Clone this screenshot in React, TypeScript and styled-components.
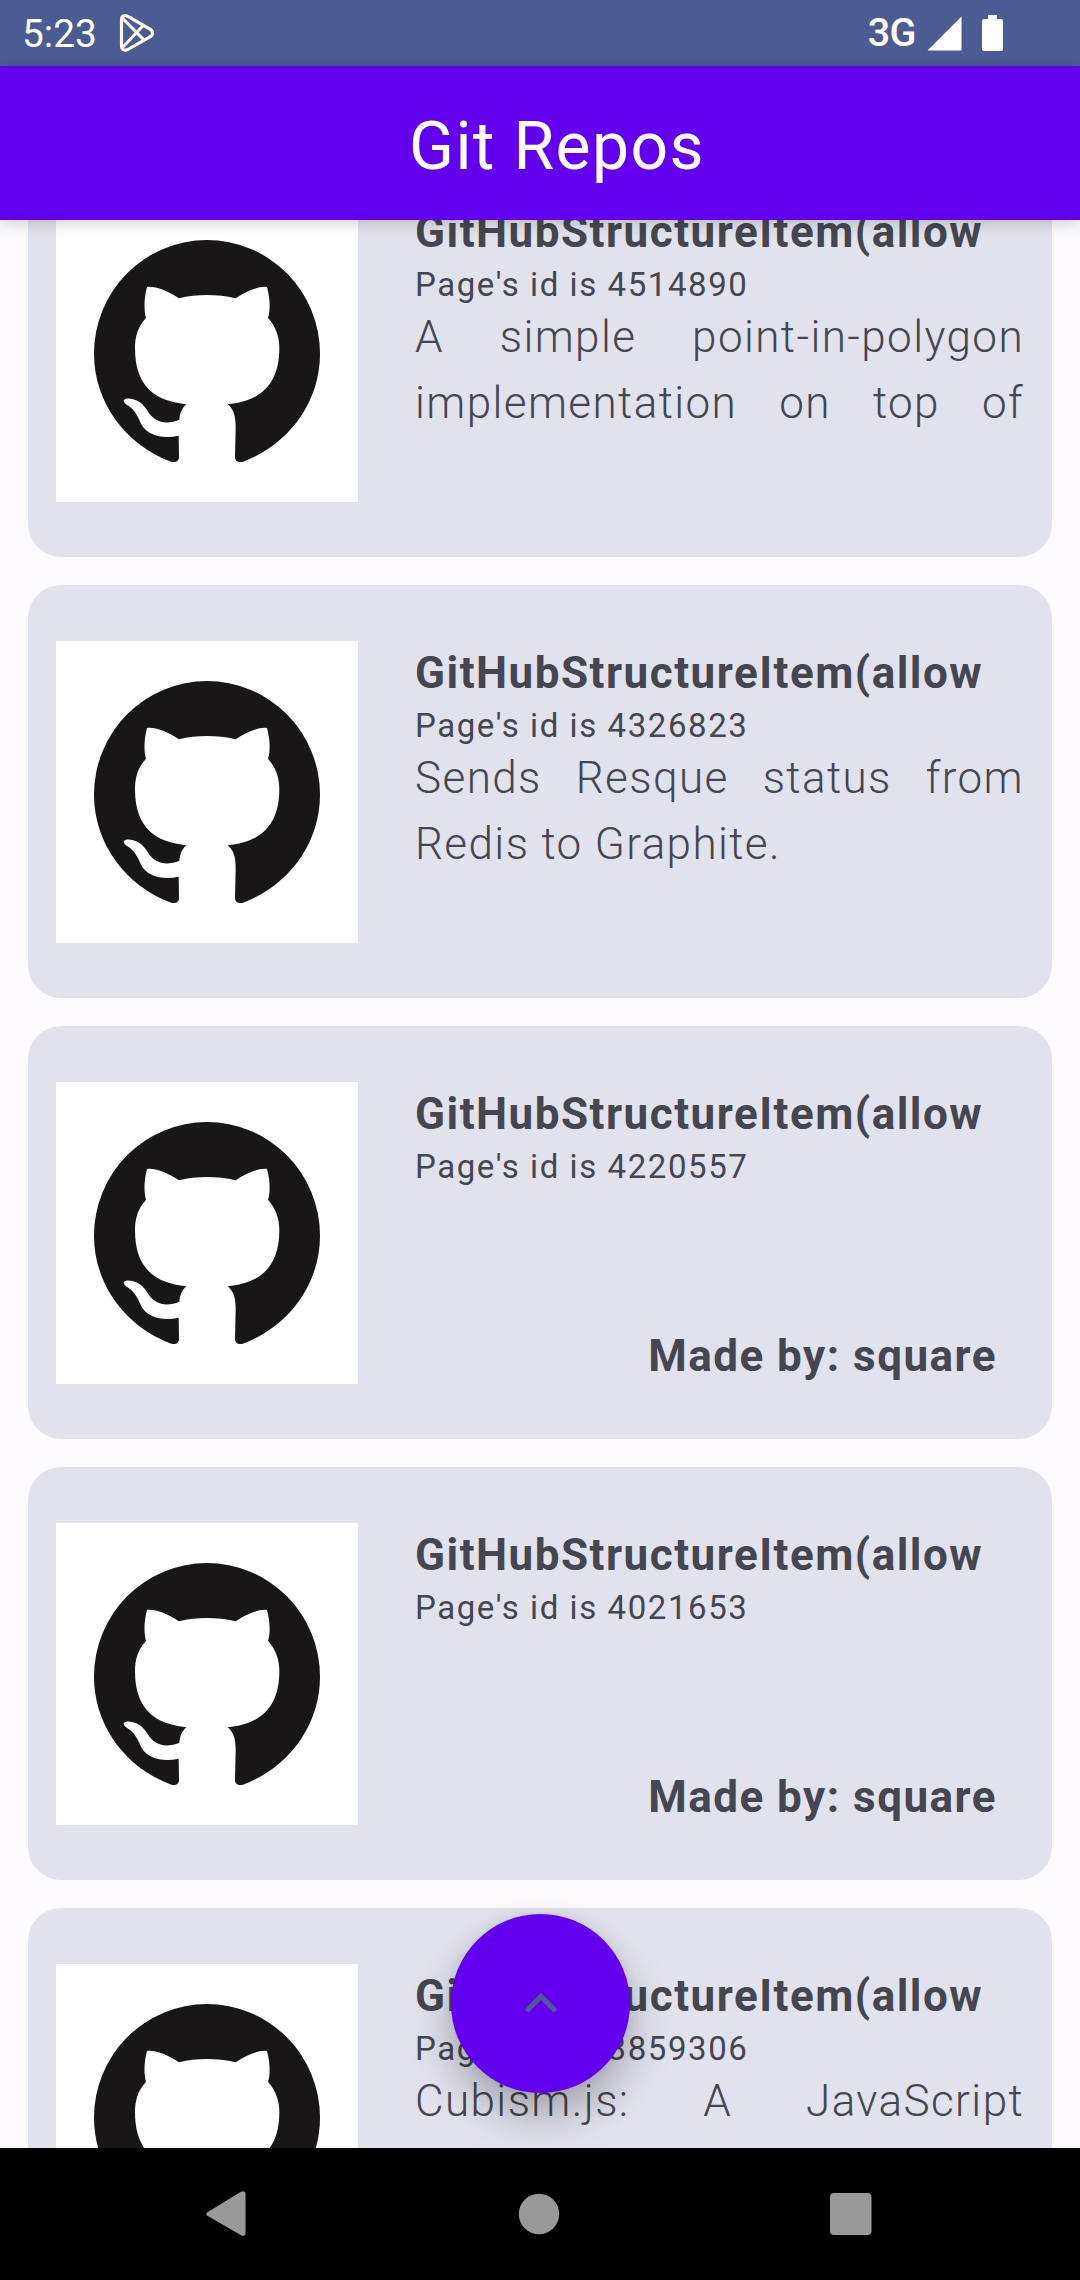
import React from 'react';
import styled, { createGlobalStyle } from 'styled-components';

const GlobalStyle = createGlobalStyle`
  * { box-sizing: border-box; }
  body { margin: 0; background: #fefbff; font-family: Roboto, "Liberation Sans", sans-serif; }
`;

const Screen = styled.div`
  width: 1080px;
  height: 2280px;
  display: flex;
  flex-direction: column;
  overflow: hidden;
  background: #fefbff;
  color: #45464f;
`;

const StatusBar = styled.header`
  flex: none;
  height: 66px;
  padding: 0 67px 0 22px;
  display: flex;
  align-items: center;
  justify-content: space-between;
  background: #4a5c92;
  color: #fff;
`;

const StatusGroup = styled.div<{ $gap: number }>`
  display: flex;
  align-items: center;
  gap: ${(p) => p.$gap}px;
`;

const Clock = styled.span`
  font-size: 38.8px;
  line-height: 46px;
  padding-top: 2px;
`;

const Network = styled.span`
  font-size: 39.5px;
  font-weight: 500;
  line-height: 46px;
  letter-spacing: -0.5px;
  padding-bottom: 1px;
`;

const AppBar = styled.div`
  flex: none;
  position: relative;
  z-index: 1;
  height: 154px;
  padding: 7px 0 0 34px;
  display: flex;
  align-items: center;
  justify-content: center;
  background: #6200ee;
  color: #fff;
  box-shadow: 0 4px 14px rgba(0, 0, 0, 0.17);
`;

const AppTitle = styled.h1`
  margin: 0;
  font-size: 66px;
  font-weight: 400;
  line-height: 77px;
  letter-spacing: 1.375px;
`;

const Content = styled.main`
  flex: 1;
  min-height: 0;
  position: relative;
  overflow: hidden;
`;

const RepoList = styled.div`
  display: flex;
  flex-direction: column;
  gap: 28px;
  padding: 0 28px;
  margin-top: -76px;
`;

const Card = styled.article`
  flex: none;
  height: 413px;
  padding: 55px 28px 0;
  display: flex;
  gap: 57px;
  background: #e1e2ec;
  border-radius: 33px;
`;

const Avatar = styled.div`
  flex: none;
  width: 302px;
  height: 302px;
  margin-top: 1px;
  background: #fff;
  svg { display: block; }
`;

const Details = styled.div`
  flex: 1;
  min-width: 0;
  height: 308px;
  display: flex;
  flex-direction: column;
`;

const RepoName = styled.h2`
  margin: 0;
  font-size: 44px;
  font-weight: 700;
  line-height: 66px;
  letter-spacing: 1.5px;
  white-space: nowrap;
`;

const RepoId = styled.div`
  font-size: 33px;
  line-height: 39px;
  letter-spacing: 1.57px;
`;

const Description = styled.p<{ $clipped?: boolean }>`
  margin: 0;
  font-size: 44px;
  font-weight: 300;
  line-height: 66px;
  letter-spacing: 1.4px;
  text-align: justify;
  text-align-last: ${(p) => (p.$clipped ? 'justify' : 'auto')};
`;

const Author = styled.div`
  margin: auto 27px 0 0;
  align-self: flex-end;
  font-size: 44px;
  font-weight: 700;
  line-height: 66px;
  letter-spacing: 1.48px;
`;

const ScrollTopButton = styled.button`
  position: absolute;
  left: 451px;
  top: 1694px;
  width: 179px;
  height: 179px;
  padding: 0 0 2px;
  border: 0;
  border-radius: 50%;
  display: flex;
  align-items: center;
  justify-content: center;
  background: #6200ee;
  box-shadow: 0 22px 44px rgba(0, 0, 0, 0.28), 0 0 12px rgba(0, 0, 0, 0.07);
`;

const NavBar = styled.nav`
  flex: none;
  height: 132px;
  background: #000;
  display: flex;
  justify-content: space-between;
  align-items: center;
  padding: 0 208px 0 206px;
`;

function OctocatMark() {
  return (
    <svg width="302" height="302" viewBox="168 213 906 906">
      <path
        fill="#181617"
        d="M621 333A339 341 0 0 0 282 674C282 823 380 949 514 998C530 1002 537 994 537 984L536 920C490 930 442 921 423 884C414 862 402 841 386 831C377 825 370 820 371 814C376 805 397 808 409 814C424 820 436 835 443 846C463 881 500 888 538 872C540 852 546 837 559 826C470 817 405 777 405 658C405 625 412 595 438 566C433 550 430 515 441 474C465 471 502 485 537 508C590 495 652 495 707 508C741 485 777 471 801 474C812 515 810 550 804 566C828 594 838 623 838 658C838 777 770 818 683 826C699 840 707 858 707 893L705 984C705 994 712 1002 729 998C862 949 960 823 960 674A339 341 0 0 0 621 333Z"
      />
    </svg>
  );
}

function PlayIcon() {
  return (
    <svg width="36" height="40" viewBox="354 40 108 120" fill="none" stroke="#fff" strokeWidth="9.5">
      <path d="M361.500 60C361.500 49 371 45 381 50L448 89C457 94 457 106 448 111L381 149C371 154 361.500 150 361.500 139Z" />
      <path d="M364 55L430 122M364 144L428 76" strokeWidth="9" />
    </svg>
  );
}

interface Repo {
  id: number;
  description?: string;
  clipped?: boolean;
  author?: string;
}

const repos: Repo[] = [
  { id: 4514890, description: 'A simple point-in-polygon implementation on top of', clipped: true },
  { id: 4326823, description: 'Sends Resque status from Redis to Graphite.' },
  { id: 4220557, author: 'square' },
  { id: 4021653, author: 'square' },
  { id: 3859306, description: 'Cubism.js: A JavaScript', clipped: true },
];

function RepoCard({ repo }: { repo: Repo }) {
  return (
    <Card>
      <Avatar>
        <OctocatMark />
      </Avatar>
      <Details>
        <RepoName>GitHubStructureItem(allow</RepoName>
        <RepoId>Page's id is {repo.id}</RepoId>
        {repo.description && <Description $clipped={repo.clipped}>{repo.description}</Description>}
        {repo.author && <Author>Made by: {repo.author}</Author>}
      </Details>
    </Card>
  );
}

export default function App() {
  return (
    <Screen>
      <GlobalStyle />
      <StatusBar>
        <StatusGroup $gap={22}>
          <Clock>5:23</Clock>
          <PlayIcon />
        </StatusGroup>
        <StatusGroup $gap={11}>
          <Network>3G</Network>
          <svg width="35" height="35" viewBox="0 0 35 35">
            <path d="M34.500 .5V34.500H.5Z" fill="#fff" />
          </svg>
          <svg width="40" height="36" viewBox="0 0 40 36">
            <path d="M15 0H24V4H28Q30 4 30 6V34Q30 36 28 36H11Q9 36 9 34V6Q9 4 11 4H15Z" fill="#fff" />
          </svg>
        </StatusGroup>
      </StatusBar>
      <AppBar>
        <AppTitle>Git Repos</AppTitle>
      </AppBar>
      <Content>
        <RepoList>
          {repos.map((repo) => (
            <RepoCard key={repo.id} repo={repo} />
          ))}
        </RepoList>
        <ScrollTopButton aria-label="Scroll to top">
          <svg width="34" height="22" viewBox="0 0 34 22" fill="none" stroke="#4a5c92" strokeWidth="5.200">
            <path d="M2.500 19L17 4.500L31.500 19" />
          </svg>
        </ScrollTopButton>
      </Content>
      <NavBar>
        <svg width="40" height="46" viewBox="0 0 40 46">
          <path d="M1 21.500L35 .8Q39.500 -1 39.500 3.500V41.500Q39.500 46 35 44.200L1 24.500Q-.5 23 1 21.500Z" fill="#999" />
        </svg>
        <svg width="44" height="42" viewBox="0 0 44 42">
          <circle cx="23" cy="21" r="20.200" fill="#999" />
        </svg>
        <svg width="42" height="42" viewBox="0 0 42 42">
          <rect width="41.500" height="42" rx="4" fill="#999" />
        </svg>
      </NavBar>
    </Screen>
  );
}
